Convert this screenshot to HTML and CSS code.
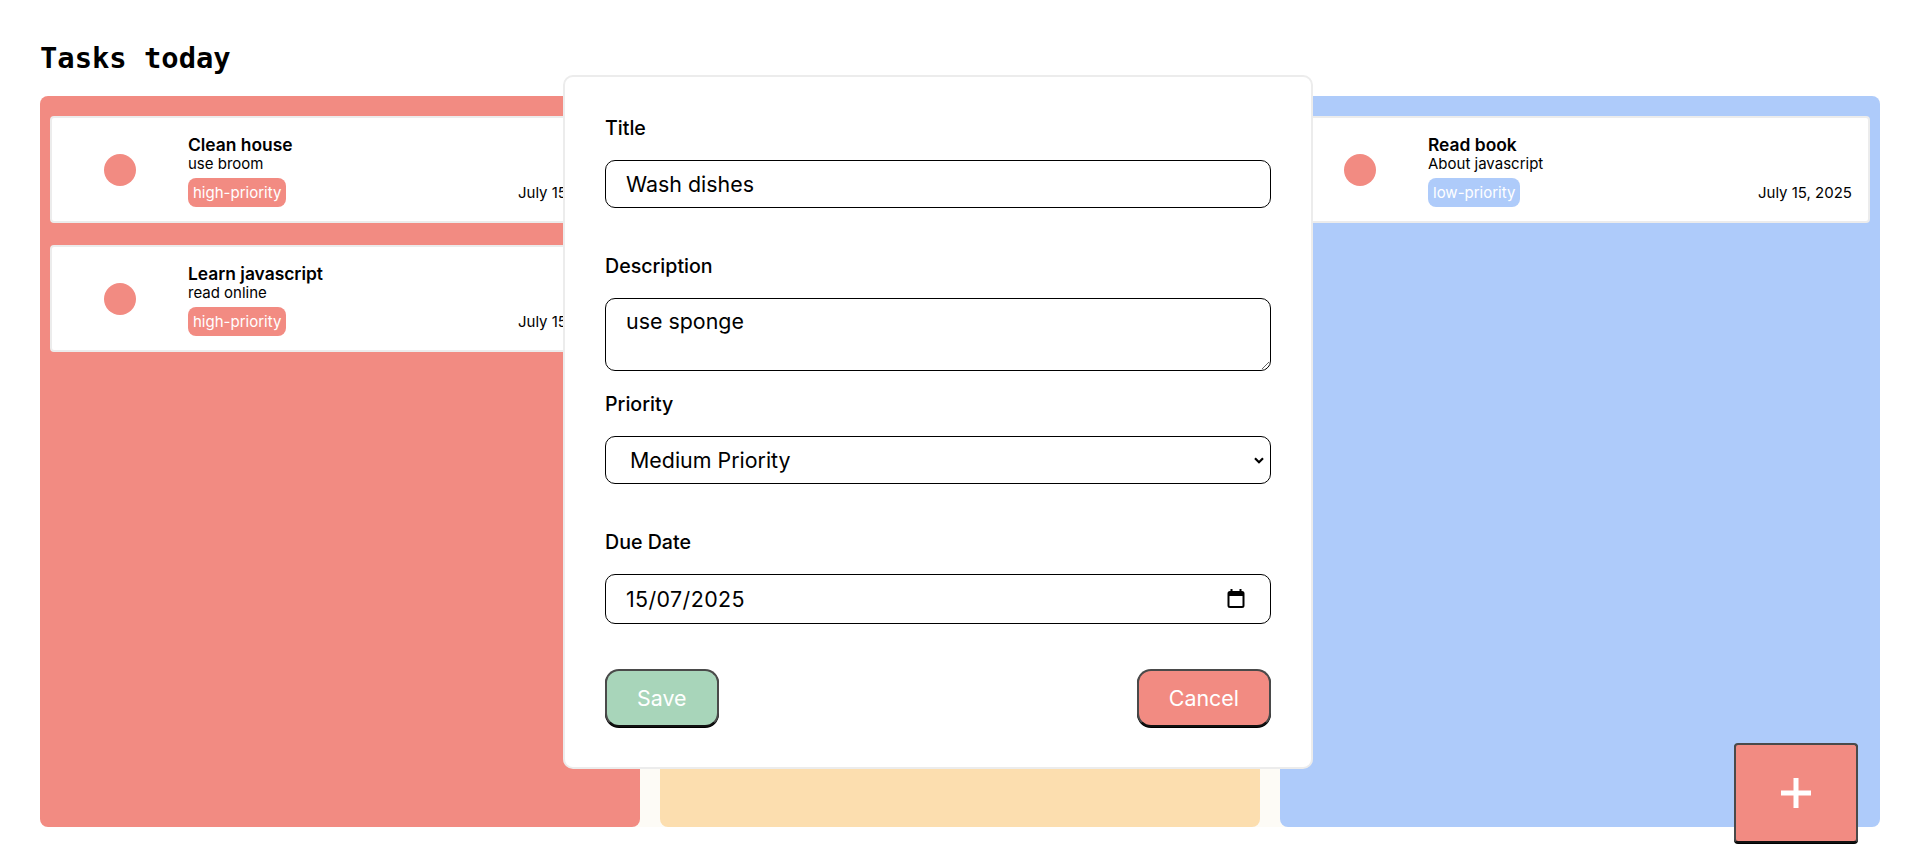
FILE: index.html
```html
<!DOCTYPE html>
<html lang="en">
<head>
<meta charset="utf-8">
<title>Tasks today</title>
<link rel="stylesheet" href="styles.css">
</head>
<body>
<main class="page">
  <h1 class="page-title">Tasks today</h1>
  <section class="board">
    <div class="column column--high">
      <article class="card">
        <span class="card-dot"></span>
        <div class="card-body">
          <div class="card-title">Clean house</div>
          <div class="card-desc">use broom</div>
          <div class="card-meta">
            <span class="badge badge--high">high-priority</span>
            <span class="card-date">July 15, 2025</span>
          </div>
        </div>
      </article>
      <article class="card">
        <span class="card-dot"></span>
        <div class="card-body">
          <div class="card-title">Learn javascript</div>
          <div class="card-desc">read online</div>
          <div class="card-meta">
            <span class="badge badge--high">high-priority</span>
            <span class="card-date">July 15, 2025</span>
          </div>
        </div>
      </article>
    </div>
    <div class="column column--medium"></div>
    <div class="column column--low">
      <article class="card">
        <span class="card-dot"></span>
        <div class="card-body">
          <div class="card-title">Read book</div>
          <div class="card-desc">About javascript</div>
          <div class="card-meta">
            <span class="badge badge--low">low-priority</span>
            <span class="card-date">July 15, 2025</span>
          </div>
        </div>
      </article>
    </div>
  </section>
</main>

<div class="modal">
  <form class="task-form">
    <div class="field">
      <label class="field-label" for="title">Title</label>
      <input class="field-input" id="title" type="text" value="Wash dishes">
    </div>
    <div class="field">
      <label class="field-label" for="desc">Description</label>
      <textarea class="field-input field-textarea" id="desc">use sponge</textarea>
    </div>
    <div class="field">
      <label class="field-label" for="prio">Priority</label>
      <select class="field-input field-select" id="prio">
        <option>High Priority</option>
        <option selected>Medium Priority</option>
        <option>Low Priority</option>
      </select>
    </div>
    <div class="field">
      <label class="field-label" for="due">Due Date</label>
      <div class="date-wrap">
        <input class="field-input field-date" id="due" type="text" value="15/07/2025">
        <svg class="date-icon" width="18" height="19" viewBox="0 0 18 19" aria-hidden="true">
          <rect x="3.5" y="0" width="2" height="3.5" fill="#000"/>
          <rect x="12.5" y="0" width="2" height="3.5" fill="#000"/>
          <rect x="1.5" y="3" width="15" height="15" rx="1.5" fill="none" stroke="#000" stroke-width="2"/>
          <rect x="1.5" y="3" width="15" height="4" fill="#000"/>
        </svg>
      </div>
    </div>
    <div class="form-actions">
      <button type="button" class="btn btn--save">Save</button>
      <button type="button" class="btn btn--cancel">Cancel</button>
    </div>
  </form>
</div>

<button type="button" class="add-btn" aria-label="Add task">
  <svg width="32" height="32" viewBox="0 0 32 32" aria-hidden="true">
    <rect x="13.5" y="1" width="5" height="30" fill="#fff"/>
    <rect x="1" y="13.5" width="30" height="5" fill="#fff"/>
  </svg>
</button>
</body>
</html>
```

FILE: styles.css
```css
* {
  box-sizing: border-box;
}

body {
  margin: 0;
  background: #ffffff;
  color: #000;
  font-family: Inter, "Noto Sans", sans-serif;
}

.page {
  padding: 0 38px 0 40px;
}

.page-title {
  margin: 0 0 21px;
  padding-top: 42px;
  font-family: "DejaVu Sans Mono", monospace;
  font-size: 28.8px;
  line-height: 33px;
  font-weight: 700;
}

.board {
  display: grid;
  grid-template-columns: repeat(3, 600px);
  gap: 20px;
  height: 731px;
  background: #fdfbf6;
  border-radius: 8px;
}

.column {
  display: flex;
  flex-direction: column;
  gap: 22px;
  padding: 20px 10px;
  border-radius: 8px;
}

.column--high {
  background: #f28b82;
}

.column--medium {
  background: #fcdeaf;
}

.column--low {
  background: #aecbfa;
}

.card {
  display: flex;
  align-items: center;
  height: 107px;
  padding: 0 16px 0 52px;
  background: #fff;
  border: 2px solid #ececec;
  border-radius: 4px;
}

.card-dot {
  flex: none;
  width: 32px;
  height: 32px;
  margin-right: 52px;
  border-radius: 50%;
  background: #f28b82;
}

.card-body {
  flex: 1;
  min-width: 0;
  padding-top: 2px;
}

.card-title {
  font-size: 17.4px;
  font-weight: 600;
  line-height: 21.5px;
}

.card-desc {
  font-size: 15px;
  line-height: 18px;
}

.card-meta {
  display: flex;
  justify-content: space-between;
  align-items: center;
  margin-top: 5px;
}

.badge {
  padding: 5.5px 5px;
  border-radius: 8px;
  color: #fff;
  font-size: 15px;
  line-height: 18px;
}

.badge--high {
  background: #f28b82;
}

.badge--low {
  background: #aecbfa;
}

.card-date {
  font-size: 15px;
  line-height: 18px;
}

/* Modal */
.modal {
  position: absolute;
  left: 563px;
  top: 75px;
  width: 750px;
  padding: 40px;
  background: #fff;
  border: 2px solid #ececec;
  border-radius: 10px;
}

.task-form {
  display: grid;
  grid-template-rows: repeat(4, 138px) auto;
}

.field {
  display: flex;
  flex-direction: column;
  gap: 20px;
}

.field-label {
  font-size: 19.6px;
  font-weight: 500;
  line-height: 23px;
}

.field-input {
  display: block;
  width: 100%;
  height: 48px;
  margin: 0;
  padding: 0 20px;
  border: 1px solid #000;
  border-radius: 10px;
  background: #fff;
  color: #000;
  font-family: Inter, "Noto Sans", sans-serif;
  font-size: 21.4px;
  outline: none;
}

.field-textarea {
  height: 73px;
  padding: 9px 20px;
  line-height: 26px;
  resize: vertical;
}

.field-select {
  appearance: none;
  -webkit-appearance: none;
  padding: 0 30px 0 24px;
  background-image: url("data:image/svg+xml;utf8,<svg xmlns='http://www.w3.org/2000/svg' width='10' height='7' viewBox='0 0 10 7'><path d='M1 1.2 L5 5.2 L9 1.2' fill='none' stroke='black' stroke-width='2.2'/></svg>");
  background-repeat: no-repeat;
  background-position: right 6px center;
}

.date-wrap {
  position: relative;
}

.field-date {
  height: 50px;
  letter-spacing: 0.4px;
}

.date-icon {
  position: absolute;
  right: 26px;
  top: 15px;
}

.form-actions {
  display: flex;
  justify-content: space-between;
  align-items: flex-start;
}

.btn {
  height: 58px;
  padding: 0 30px;
  border: 2px solid #4a4a4a;
  border-bottom-color: #111;
  border-radius: 14px;
  box-shadow: 0 1px 0 #000;
  color: #fff;
  font-family: Inter, "Noto Sans", sans-serif;
  font-size: 21.4px;
  cursor: pointer;
}

.btn--save {
  background: #a8d5ba;
}

.btn--cancel {
  background: #f28b82;
}

.add-btn {
  position: fixed;
  right: 60px;
  bottom: 23px;
  width: 124px;
  height: 100px;
  padding: 0;
  display: flex;
  align-items: center;
  justify-content: center;
  background: #f28b82;
  border: 2px solid #4a4a4a;
  border-bottom-color: #111;
  border-radius: 4px;
  box-shadow: 0 1px 0 #000;
  cursor: pointer;
}
```
